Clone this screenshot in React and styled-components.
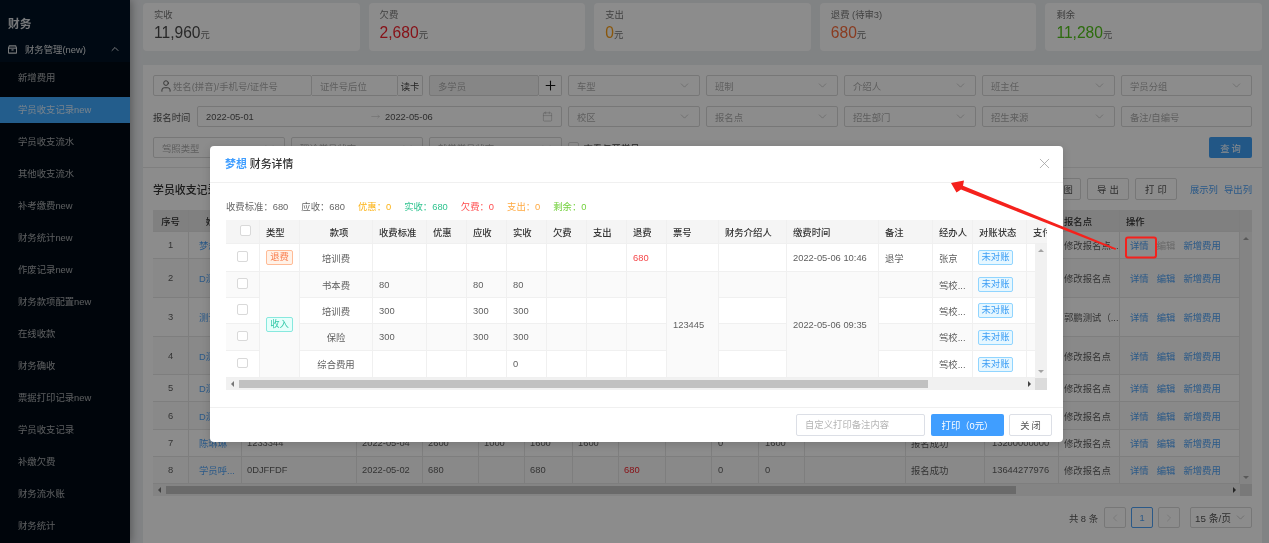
import React from 'react';
import styled, { createGlobalStyle } from 'styled-components';
import { User, Plus, Calendar, ChevronDown, ChevronUp, ChevronLeft, ChevronRight, X, MoveRight } from 'lucide-react';

const Global = createGlobalStyle`
  html, body { margin: 0; padding: 0; background: #f0f2f5; }
  * { box-sizing: border-box; }
  body { font-family: "Liberation Sans", "Noto Sans CJK SC", sans-serif; font-size: 9.36px; color: #666; }
`;

const Page = styled.div`
  position: relative; display: flex; width: 1269px; height: 543px; overflow: hidden;
  background: #eceef1; filter: blur(0.3px);
`;
const Sidebar = styled.aside`
  flex: 0 0 130px; display: flex; flex-direction: column; background: #001224; overflow: hidden;
  box-shadow: 2px 0 8px rgba(0,0,0,.3); z-index: 1; color: rgba(255,255,255,.65);
`;
const SideTitle = styled.div`
  flex: 0 0 22px; margin-top: 14px; line-height: 20px; padding-left: 8px;
  font-size: 11.7px; font-weight: 700; color: rgba(255,255,255,.85);
`;
const SideGroup = styled.div`
  flex: 0 0 26px; display: flex; align-items: center; gap: 8px; padding: 0 9px 0 8px;
  color: rgba(255,255,255,.85);
  span { flex: 1; }
`;
const SubMenu = styled.nav`
  flex: 1 0 auto; background: #000a14; padding-top: 3px; display: flex; flex-direction: column; gap: 6px;
`;
const MenuItem = styled.div`
  flex: 0 0 26px; line-height: 26px; padding-left: 18px;
  background: ${p => (p.$active ? '#40a9ff' : 'transparent')};
  color: ${p => (p.$active ? 'rgba(255,255,255,.8)' : 'rgba(255,255,255,.65)')};
`;
const Main = styled.main`
  flex: 1; min-width: 0; padding: 3px 7px 0 13px; display: flex; flex-direction: column;
`;
const Stats = styled.section`
  display: flex; gap: 9px; flex: 0 0 48px;
`;
const StatCard = styled.div`
  flex: 1; background: #fff; border-radius: 4px; padding: 5px 11px 0; color: #777;
`;
const StatLabel = styled.div` height: 14px; line-height: 14px; `;
const StatValue = styled.div`
  height: 22px; line-height: 22px; font-size: 15.6px; color: ${p => p.$color};
  small { font-size: 9.36px; color: #777; }
`;
const Panel = styled.section`
  margin-top: 14px; flex: 1; background: #fff; display: flex; flex-direction: column;
`;
const Filters = styled.div`
  display: grid; grid-template-columns: 409px 132px 132px 132px 133px 131px; column-gap: 6px; row-gap: 10px;
  padding: 10px; border-bottom: 1px solid #e8e8e8; height: 103px; align-content: start;
`;
const Group = styled.div` display: flex; align-items: center; `;
const Triple = styled.div` display: grid; grid-template-columns: 132px 132px 133px; column-gap: 6px; `;
const Field = styled.div`
  height: 21px; min-width: 0; display: flex; align-items: center; justify-content: space-between; gap: 3px;
  padding: 0 8px; border: 1px solid #d9d9d9; border-radius: 2px; background: ${p => (p.$muted ? '#f5f5f5' : '#fff')};
  color: #adadad; white-space: nowrap;
  ${p => (p.$w ? `flex: 0 0 ${p.$w}px;` : '')}
  ${p => (p.$joined ? 'border-left: 0; border-radius: 0 2px 2px 0;' : '')}
  ${p => (p.$gap ? `margin-left: ${p.$gap}px;` : '')}
`;
const NameField = styled(Field)` padding-left: 5px; gap: 0; `;
const NameText = styled.span` flex: 1; `;
const FieldLabel = styled.label` flex: 0 0 44px; color: #555; `;
const ReadCard = styled(Field)` color: #444; padding: 0 2px; justify-content: center; `;
const PlusBox = styled(Field)` color: #111; justify-content: center; padding: 0; `;
const DateField = styled(Field)` flex: 1; justify-content: flex-start; gap: 0; color: #555; `;
const DateStart = styled.span` flex: 0 0 165px; `;
const DateEnd = styled.span` flex: 1; margin-left: 5px; `;
const CheckLine = styled.div` display: flex; align-items: center; gap: 5px; height: 21px; color: #444; white-space: nowrap; `;
const Check = styled.span`
  display: inline-block; flex: none; width: 10.5px; height: 10.5px; border: 1px solid #d9d9d9; border-radius: 2px; background: #fff;
`;
const QueryCell = styled.div` display: flex; justify-content: flex-end; `;
const QueryButton = styled.button`
  width: 43px; height: 21px; border: 0; border-radius: 2px; background: #3f9ff5; color: #fff; padding: 0 0 0 2px;
  font: inherit; letter-spacing: 2px;
`;
const Section = styled.div` padding: 10px 10px 0; display: flex; flex-direction: column; `;
const Toolbar = styled.div`
  height: 22px; display: flex; align-items: center; gap: 6px; margin-bottom: 10px;
`;
const SectionTitle = styled.h2`
  margin: 0; flex: 1; font-size: 10.9px; font-weight: 500; color: #333;
`;
const ToolButton = styled.button`
  height: 22px; width: ${p => p.$w}px; padding: 0 0 0 3px; border: 1px solid #d9d9d9; border-radius: 2px; background: #fff; color: #555;
  font: inherit; letter-spacing: 3px;
`;
const ToolLink = styled.a`
  color: #4fa3f7; margin-left: ${p => p.$ml || 0}px;
`;

const TableFrame = styled.div` display: flex; flex-direction: column; width: ${p => p.$w}px; `;
const HeadClip = styled.div` overflow: hidden; background: ${p => p.$bg}; `;
const BodyRow = styled.div` display: flex; `;
const BodyClip = styled.div` flex: 1; min-width: 0; overflow: hidden; `;
const Grid = styled.table`
  border-collapse: separate; border-spacing: 0; table-layout: fixed; width: ${p => p.$w}px;
`;
const Col = styled.col` width: ${p => p.$w}px; `;
const Tr = styled.tr` height: ${p => p.$h}px; background: ${p => (p.$alt ? '#fafafa' : '#fff')}; `;
const Th = styled.th`
  padding: 0 ${p => p.$r ?? 6}px 0 ${p => p.$l ?? 6}px; font-weight: 500; color: #333; text-align: ${p => p.$align || 'left'}; overflow: hidden; white-space: nowrap;
  background: ${p => p.$bg}; border-right: 1px solid ${p => p.$line}; border-bottom: 1px solid ${p => p.$line};
`;
const Td = styled.td`
  padding: 0 ${p => p.$r ?? 6}px 0 ${p => p.$l ?? 6}px; overflow: hidden; white-space: nowrap; text-overflow: ellipsis;
  text-align: ${p => p.$align || 'left'}; color: ${p => p.$color || '#5f5f5f'};
  border-right: 1px solid ${p => p.$line}; border-bottom: 1px solid ${p => p.$line};
  ${p => (p.$fill ? `background: ${p.$fill};` : '')}
`;
const VBar = styled.div`
  flex: 0 0 12px; background: #f1f1f1; display: flex; flex-direction: column; justify-content: space-between; align-items: center;
  padding: 5px 0;
`;
const HBar = styled.div` display: flex; height: 12px; background: #f1f1f1; `;
const HTrack = styled.div` flex: 1; display: flex; align-items: center; `;
const ArrowBox = styled.div` flex: 0 0 ${p => p.$w}px; display: flex; align-items: center; justify-content: center; `;
const Thumb = styled.div` height: 8px; width: ${p => p.$w}px; background: ${p => p.$c}; `;
const Spacer = styled.div` flex: 1; `;
const Corner = styled.div` flex: 0 0 12px; background: #dcdcdc; `;
const Tri = styled.i`
  display: block; width: 0; height: 0; border-style: solid;
  ${p => ({
    up: 'border-width: 0 3px 3px; border-color: transparent transparent #a3a3a3;',
    down: 'border-width: 3px 3px 0; border-color: #a3a3a3 transparent transparent;',
    left: 'border-width: 3px 3px 3px 0; border-color: transparent #777 transparent transparent;',
    right: 'border-width: 3px 0 3px 3px; border-color: transparent transparent transparent #444;',
  }[p.$d])}
`;
const NameLink = styled.span` color: #4fa3f7; `;
const Actions = styled.div` display: flex; gap: 8px; `;
const ActionLink = styled.a` color: ${p => (p.$off ? '#bfbfbf' : '#4fa3f7')}; `;

const Pager = styled.div`
  margin-top: 11px; display: flex; justify-content: flex-end; align-items: center; gap: 5px; height: 21px; color: #555;
`;
const PageBox = styled.div`
  width: ${p => p.$w || 22}px; height: 21px; display: flex; align-items: center; justify-content: center; gap: 3px;
  border: 1px solid ${p => (p.$on ? '#4fa3f7' : '#d9d9d9')}; border-radius: 2px; background: #fff;
  color: ${p => (p.$on ? '#4fa3f7' : '#bbb')}; margin-left: ${p => p.$ml || 0}px;
`;
const PageSize = styled.span` color: #555; font-size: 9.8px; `;

const Mask = styled.div` position: absolute; inset: 0; background: rgba(0,0,0,.45); z-index: 5; `;
const Modal = styled.div`
  position: absolute; left: 210px; top: 146px; width: 853px; height: 296px; z-index: 6; background: #fff; border-radius: 4px;
  display: flex; flex-direction: column; box-shadow: 0 2px 8px rgba(0,0,0,.15);
`;
const ModalHead = styled.header`
  flex: 0 0 37px; display: flex; align-items: center; justify-content: space-between; padding: 0 10px 2px 15px; border-bottom: 1px solid #f0f0f0;
  font-size: 10.9px; font-weight: 500; color: #333;
  svg { color: #a0a0a0; }
`;
const Accent = styled.span` color: #409eff; font-weight: 700; margin-right: 3px; `;
const ModalBody = styled.div` flex: 1; padding: 17px 16px 0; `;
const Summary = styled.div` display: flex; gap: 13px; height: 14px; line-height: 14px; margin-bottom: 6px; `;
const SumItem = styled.span` color: ${p => p.$c}; `;
const ModalFoot = styled.footer`
  flex: 0 0 35px; display: flex; justify-content: flex-end; align-items: center; gap: 5px; padding: 0 11px; border-top: 1px solid #f0f0f0;
`;
const RemarkInput = styled.div`
  width: 129px; height: 22px; margin-right: 1px; padding: 0 8px; line-height: 20px; border: 1px solid #dcdfe6; border-radius: 2px; color: #b5b5b5;
`;
const PrintButton = styled.button`
  width: 73px; height: 22px; padding: 0; border: 0; border-radius: 2px; background: #409eff; color: #fff; font: inherit;
`;
const CloseButton = styled.button`
  width: 43px; height: 22px; padding: 0 0 0 2px; border: 1px solid #dcdfe6; border-radius: 2px; background: #fff; color: #555; font: inherit; letter-spacing: 2px;
`;
const TAG = {
  refund: ['#fff2e8', '#ffbb96', '#fa7d4c'],
  income: ['#e6fffb', '#87e8de', '#36c9a9'],
  status: ['#e6f7ff', '#91d5ff', '#3c9ef5'],
};
const Tag = styled.span`
  display: inline-block; height: 15px; line-height: 13px; text-align: center; width: ${p => p.$w}px; border-radius: 2px;
  background: ${p => TAG[p.$k][0]}; border: 1px solid ${p => TAG[p.$k][1]}; color: ${p => TAG[p.$k][2]};
`;
const Annotation = styled.svg` position: absolute; left: 0; top: 0; z-index: 7; pointer-events: none; `;

const menus = ['新增费用','学员收支记录new','学员收支流水','其他收支流水','补考缴费new','财务统计new','作废记录new','财务款项配置new','在线收款','财务确收','票据打印记录new','学员收支记录','补缴欠费','财务流水账','财务统计'];
const stats = [
  ['实收','11,960','#4a4a4a'],['欠费','2,680','#f5222d'],['支出','0','#fa9d14'],['退费 (待审3)','680','#fa6d3c'],['剩余','11,280','#52c41a'],
];
const selects1 = ['车型','班制','介绍人','班主任','学员分组'];
const selects2 = ['校区','报名点','招生部门','招生来源'];

const mainCols = [36,53,115,66,56,46,48,46,47,46,47,46,101,79,74,61,120];
const mainHead = ['序号','姓名','','','','','','','','','','','','','','报名点','操作'];
const rows = [
  { h: 27, name: '梦想', point: '修改报名点...', off: true, cells: [] },
  { h: 39, name: 'D测试', point: '修改报名点', cells: [] },
  { h: 39, name: '测试', point: '郭鹏测试（...', cells: [] },
  { h: 38, name: 'D测试', point: '修改报名点', cells: [] },
  { h: 27, name: 'D测试', point: '修改报名点', cells: [] },
  { h: 28, name: 'D测试', point: '修改报名点', cells: [] },
  { h: 27, name: '陈琳琳', point: '修改报名点', cells: ['1233344','2022-05-04','2600','1000','1600','1600','','','0','1600','','报名成功','13200000000'] },
  { h: 27, name: '学员呼...', point: '修改报名点', cells: ['0DJFFDF','2022-05-02','680','','680','','680','','0','0','','报名成功','13644277976'] },
];

const modalCols = [34,40,73,54,40,40,40,40,40,40,52,68,92,54,40,54,60];
const modalHead = ['','类型','款项','收费标准','优惠','应收','实收','欠费','支出','退费','票号','财务介绍人','缴费时间','备注','经办人','对账状态','支付'];
const LINE = '#f0f0f0';

function MainTable() {
  const line = '#e6e6e6';
  return (
    <TableFrame $w={1099}>
      <HeadClip $bg="#e9e9e9">
        <Grid $w={1087}>
          <colgroup>{mainCols.map((w, i) => <Col key={i} $w={w} />)}</colgroup>
          <thead>
            <Tr $h={22}>
              {mainHead.map((h, i) => <Th key={i} $align={i < 2 ? 'center' : 'left'} $bg="#e9e9e9" $line={line} $l={i === 15 ? 5 : 6}>{h}</Th>)}
            </Tr>
          </thead>
        </Grid>
      </HeadClip>
      <BodyRow>
        <BodyClip>
          <Grid $w={1087}>
            <colgroup>{mainCols.map((w, i) => <Col key={i} $w={w} />)}</colgroup>
            <tbody>
              {rows.map((r, i) => (
                <Tr key={i} $h={r.h} $alt={i % 2 === 1}>
                  <Td $align="center" $line={line}>{i + 1}</Td>
                  <Td $l={10} $r={2} $line={line}><NameLink>{r.name}</NameLink></Td>
                  {Array.from({ length: 13 }, (_, j) => (
                    <Td key={j} $line={line} $l={j === 12 ? 7 : j === 8 || j === 9 ? 6 : 5} $r={2}
                      $color={j === 6 ? '#f5222d' : undefined}>{r.cells[j] || ''}</Td>
                  ))}
                  <Td $line={line} $l={5} $r={0}>{r.point}</Td>
                  <Td $line={line} $l={10} $r={2}>
                    <Actions>
                      <ActionLink>详情</ActionLink>
                      <ActionLink $off={r.off}>编辑</ActionLink>
                      <ActionLink>新增费用</ActionLink>
                    </Actions>
                  </Td>
                </Tr>
              ))}
            </tbody>
          </Grid>
        </BodyClip>
        <VBar><Tri $d="up" /><Tri $d="down" /></VBar>
      </BodyRow>
      <HBar>
        <HTrack>
          <ArrowBox $w={13}><Tri $d="left" /></ArrowBox>
          <Thumb $w={850} $c="#c1c1c1" />
          <Spacer />
          <ArrowBox $w={12}><Tri $d="right" /></ArrowBox>
        </HTrack>
        <Corner />
      </HBar>
    </TableFrame>
  );
}

function Status() { return <Tag $k="status" $w={35}>未对账</Tag>; }

function ModalTable() {
  const blanks = n => Array.from({ length: n }, (_, i) => <Td key={i} $line={LINE} />);
  const money = (v, key) => <Td key={key} $line={LINE}>{v}</Td>;
  const incomeRows = [
    [26, true, '书本费', '80', '80', '80'],
    [26, false, '培训费', '300', '300', '300'],
    [27, true, '保险', '300', '300', '300'],
    [27, false, '综合费用', '', '', '0'],
  ];
  return (
    <TableFrame $w={821}>
      <HeadClip $bg="#f5f5f5">
        <Grid $w={861}>
          <colgroup>{modalCols.map((w, i) => <Col key={i} $w={w} />)}</colgroup>
          <thead>
            <Tr $h={24}>
              {modalHead.map((h, i) => (
                <Th key={i} $bg="#f5f5f5" $line={LINE} $r={0} $align={i === 0 || i === 2 ? 'center' : 'left'}>
                  {i === 0 ? <Check /> : h}
                </Th>
              ))}
            </Tr>
          </thead>
        </Grid>
      </HeadClip>
      <BodyRow>
        <BodyClip>
          <Grid $w={861}>
            <colgroup>{modalCols.map((w, i) => <Col key={i} $w={w} />)}</colgroup>
            <tbody>
              <Tr $h={28}>
                <Td $align="center" $line={LINE}><Check /></Td>
                <Td $line={LINE}><Tag $k="refund" $w={27}>退费</Tag></Td>
                <Td $align="center" $line={LINE}>培训费</Td>
                {blanks(6)}
                <Td $color="#f5474a" $line={LINE}>680</Td>
                {blanks(2)}
                <Td $line={LINE}>2022-05-06 10:46</Td>
                <Td $line={LINE}>退学</Td>
                <Td $line={LINE}>张京</Td>
                <Td $line={LINE} $l={5} $r={0}><Status /></Td>
                <Td $line={LINE} />
              </Tr>
              {incomeRows.map((r, i) => (
                <Tr key={i} $h={r[0]} $alt={r[1]}>
                  <Td $align="center" $line={LINE}><Check /></Td>
                  {i === 0 && <Td rowSpan={4} $fill="#fafafa" $line={LINE}><Tag $k="income" $w={27}>收入</Tag></Td>}
                  <Td $align="center" $line={LINE}>{r[2]}</Td>
                  {money(r[3], 'a')}
                  <Td $line={LINE} />
                  {money(r[4], 'b')}
                  {money(r[5], 'c')}
                  {blanks(3)}
                  {i === 0 && <Td rowSpan={4} $fill="#fafafa" $line={LINE}>123445</Td>}
                  <Td $line={LINE} />
                  {i === 0 && <Td rowSpan={4} $fill="#fafafa" $line={LINE}>2022-05-06 09:35</Td>}
                  <Td $line={LINE} />
                  <Td $line={LINE} $r={0}>驾校...</Td>
                  <Td $line={LINE} $l={5} $r={0}><Status /></Td>
                  <Td $line={LINE} />
                </Tr>
              ))}
            </tbody>
          </Grid>
        </BodyClip>
        <VBar><Tri $d="up" /><Tri $d="down" /></VBar>
      </BodyRow>
      <HBar>
        <HTrack>
          <ArrowBox $w={13}><Tri $d="left" /></ArrowBox>
          <Thumb $w={689} $c="#c1c1c1" />
          <Spacer />
          <ArrowBox $w={12}><Tri $d="right" /></ArrowBox>
        </HTrack>
        <Corner />
      </HBar>
    </TableFrame>
  );
}

const Down = () => <ChevronDown size={13} strokeWidth={1.2} color="#b5b5b5" />;

export default function App() {
  return (
    <Page>
      <Global />
      <Sidebar>
        <SideTitle>财务</SideTitle>
        <SideGroup>
          <svg width="9" height="9" viewBox="0 0 10 10" fill="none" stroke="#fff" strokeOpacity=".85" strokeWidth="1.2">
            <path d="M1.5 1h7l1 2.4v5.1a.5.5 0 0 1-.5.5H1a.5.5 0 0 1-.5-.5V3.4z" />
            <path d="M.5 3.5h9" />
            <rect x="3.8" y="4.8" width="2.4" height="1.4" fill="#fff" stroke="none" fillOpacity=".85" />
          </svg>
          <span>财务管理(new)</span>
          <ChevronUp size={12} strokeWidth={2} />
        </SideGroup>
        <SubMenu>
          {menus.map((m, i) => <MenuItem key={m + i} $active={i === 1}>{m}</MenuItem>)}
        </SubMenu>
      </Sidebar>
      <Main>
        <Stats>
          {stats.map(([l, v, c]) => (
            <StatCard key={l}>
              <StatLabel>{l}</StatLabel>
              <StatValue $color={c}>{v}<small>元</small></StatValue>
            </StatCard>
          ))}
        </Stats>
        <Panel>
          <Filters>
            <Group>
              <NameField $w={159}><User size={14} strokeWidth={1.5} color="#555" /><NameText>姓名(拼音)/手机号/证件号</NameText></NameField>
              <Field $w={86} $joined>证件号后位</Field>
              <ReadCard $w={25} $joined>读卡</ReadCard>
              <Field $w={110} $muted $gap={6}>多学员</Field>
              <PlusBox $w={23} $joined><Plus size={15} strokeWidth={1.7} /></PlusBox>
            </Group>
            {selects1.map(s => <Field key={s}>{s}<Down /></Field>)}
            <Group>
              <FieldLabel>报名时间</FieldLabel>
              <DateField>
                <DateStart>2022-05-01</DateStart>
                <MoveRight size={9} strokeWidth={1} color="#aaa" />
                <DateEnd>2022-05-06</DateEnd>
                <Calendar size={11} strokeWidth={1.1} color="#aaa" />
              </DateField>
            </Group>
            {selects2.map(s => <Field key={s}>{s}<Down /></Field>)}
            <Field>备注/自编号</Field>
            <Triple>
              <Field>驾照类型<Down /></Field>
              <Field>理论学员状态<Down /></Field>
              <Field>就学学员状态<Down /></Field>
            </Triple>
            <CheckLine><Check />查看与开学日</CheckLine>
            <span /><span /><span />
            <QueryCell><QueryButton>查询</QueryButton></QueryCell>
          </Filters>
          <Section>
            <Toolbar>
              <SectionTitle>学员收支记录</SectionTitle>
              <ToolButton $w={50}>统计图</ToolButton>
              <ToolButton $w={42}>导出</ToolButton>
              <ToolButton $w={42}>打印</ToolButton>
              <ToolLink $ml={7}>展示列</ToolLink>
              <ToolLink>导出列</ToolLink>
            </Toolbar>
            <MainTable />
            <Pager>
              共 8 条
              <PageBox $ml={1}><ChevronLeft size={12} strokeWidth={1} /></PageBox>
              <PageBox $on>1</PageBox>
              <PageBox><ChevronRight size={12} strokeWidth={1} /></PageBox>
              <PageBox $w={62} $ml={5}><PageSize>15 条/页</PageSize><Down /></PageBox>
            </Pager>
          </Section>
        </Panel>
      </Main>
      <Mask />
      <Modal>
        <ModalHead>
          <div><Accent>梦想</Accent>财务详情</div>
          <X size={17} strokeWidth={1.1} />
        </ModalHead>
        <ModalBody>
          <Summary>
            <SumItem $c="#666">收费标准：680</SumItem>
            <SumItem $c="#666">应收：680</SumItem>
            <SumItem $c="#fcb316">优惠：0</SumItem>
            <SumItem $c="#2fc38f">实收：680</SumItem>
            <SumItem $c="#ff4d4f">欠费：0</SumItem>
            <SumItem $c="#ffa940">支出：0</SumItem>
            <SumItem $c="#73d13d">剩余：0</SumItem>
          </Summary>
          <ModalTable />
        </ModalBody>
        <ModalFoot>
          <RemarkInput>自定义打印备注内容</RemarkInput>
          <PrintButton>打印（0元）</PrintButton>
          <CloseButton>关闭</CloseButton>
        </ModalFoot>
      </Modal>
      <Annotation width="1269" height="543" viewBox="0 0 1269 543">
        <polygon fill="#f5211c" points="951,183 964,180.5 963,185.8 1116,248.2 1115.5,250 961,189.6 956.5,192.5" />
        <rect x="1126" y="237.5" width="30" height="20" rx="2" fill="none" stroke="#f5211c" strokeWidth="2" />
      </Annotation>
    </Page>
  );
}
